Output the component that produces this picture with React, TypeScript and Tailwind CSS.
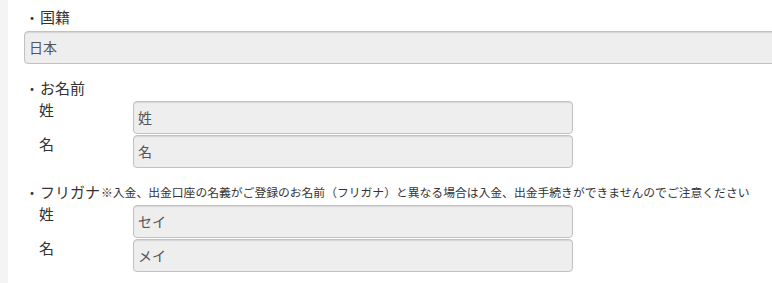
import React from 'react';

const font = { fontFamily: '"Noto Sans CJK JP", "Noto Sans", sans-serif' };

function Field({ value, className = '' }: { value: string; className?: string }) {
  return (
    <div
      className={`flex h-[33px] items-center rounded-[4px] border border-[#c2c2c2] bg-[#eeeeee] pl-[4px] text-[14px] text-[#555555] shadow-[inset_0_1px_1px_rgba(0,0,0,0.1)] ${className}`}
    >
      {value}
    </div>
  );
}

function SubRow({ label, value }: { label: string; value: string }) {
  return (
    <div className="flex">
      <div className="w-[109px] shrink-0 pl-[15px] leading-[18px] text-[15px] text-[#333333]">{label}</div>
      <Field value={value} className="w-[440px]" />
    </div>
  );
}

export default function App() {
  return (
    <div className="flex h-[283px] w-[772px] overflow-hidden bg-white" style={font}>
      <div className="w-[8px] shrink-0 bg-[#f4f4f4]" />
      <div className="flex flex-col pl-[16px] pt-[7px]">
        <div className="flex h-[20px] items-center text-[15px] leading-[20px] text-[#333333]">
          <span className="w-[16px] text-center text-[14px]">・</span>
          <span>国籍</span>
        </div>
        <Field value="日本" className="mt-[4px] w-[800px]" />

        <div className="mt-[14px] flex h-[20px] items-center text-[15px] leading-[20px] text-[#333333]">
          <span className="w-[16px] text-center text-[14px]">・</span>
          <span>お名前</span>
        </div>
        <div className="mt-[3px] flex flex-col gap-[1px]">
          <SubRow label="姓" value="姓" />
          <SubRow label="名" value="名" />
        </div>

        <div className="mt-[14px] flex h-[20px] items-center whitespace-nowrap leading-[20px] text-[#333333]">
          <span className="w-[16px] text-center text-[14px]">・</span>
          <span className="text-[15px]">フリガナ</span>
          <span className="pl-[1px] text-[11.8px]">
            ※入金、出金口座の名義がご登録のお名前（フリガナ）と異なる場合は入金、出金手続きができませんのでご注意ください
          </span>
        </div>
        <div className="mt-[3px] flex flex-col gap-[1px]">
          <SubRow label="姓" value="セイ" />
          <SubRow label="名" value="メイ" />
        </div>
      </div>
    </div>
  );
}
